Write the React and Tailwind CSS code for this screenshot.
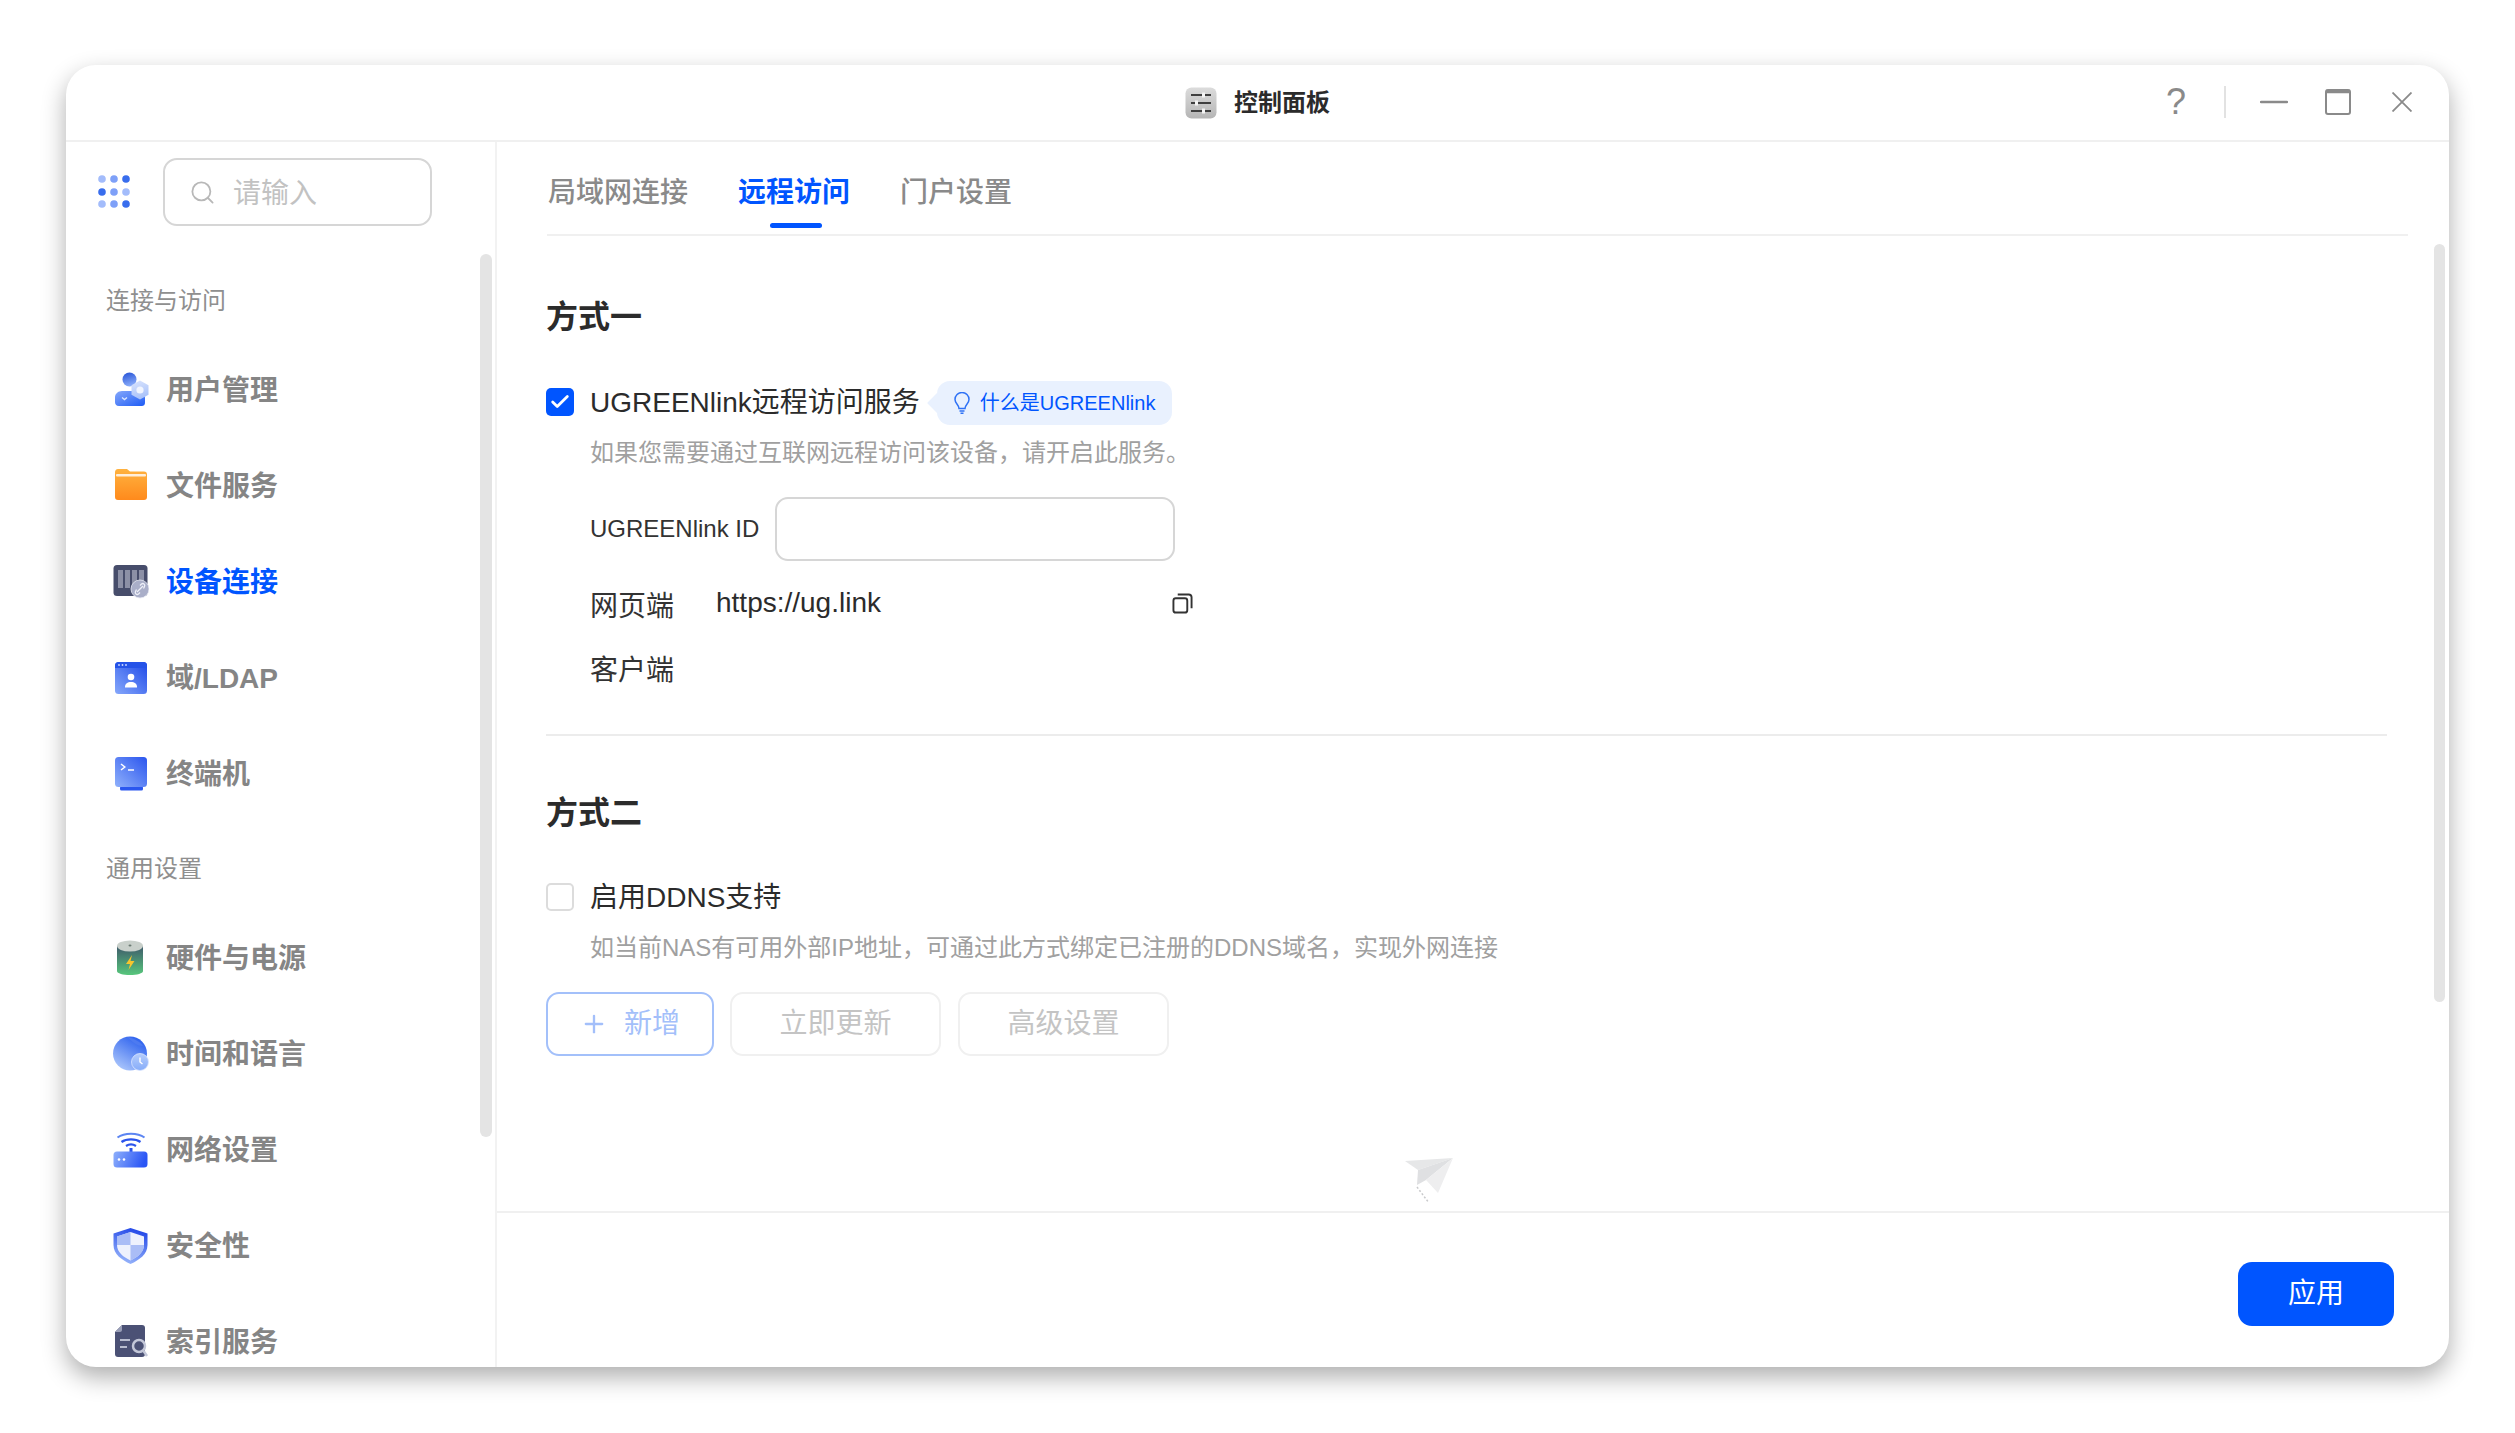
import React from 'react';
import { Search, Plus, Check } from 'lucide-react';

const Grad = ({ id, from, to, x1 = 0, y1 = 0, x2 = 1, y2 = 1 }) => (
  <linearGradient id={id} x1={x1} y1={y1} x2={x2} y2={y2}>
    <stop offset="0" stopColor={from} />
    <stop offset="1" stopColor={to} />
  </linearGradient>
);

function UserIcon() {
  return (
    <svg viewBox="0 0 36 36" className="w-[36px] h-[36px] shrink-0">
      <defs>
        <Grad id="u1" from="#2350d6" to="#86a9f8" x2={0.300} />
        <Grad id="u2" from="#86a8fb" to="#1d5bf5" />
        <Grad id="u3" from="#dbe5fd" to="#a9c2fa" x2={0.300} />
      </defs>
      <circle cx="16.500" cy="7.500" r="7" fill="url(#u1)" />
      <path d="M2 25c0-3 3-6 7-6h12c6 0 11 3 11 7v4c0 3-1 4-4 4H6c-3 0-4-2-4-4z" fill="url(#u2)" />
      <path d="M9 25.500l2.500 2 2.500-2" stroke="#dbe6ff" strokeWidth="1.400" fill="none" />
      <path d="M27 8.500l8.500 4.800v9.400L27 27.500l-8.500-4.800v-9.400z" fill="url(#u3)" />
      <circle cx="27" cy="18" r="3.600" fill="#f1f5ff" />
    </svg>
  );
}

function FolderIcon() {
  return (
    <svg viewBox="0 0 36 36" className="w-[36px] h-[36px] shrink-0">
      <defs>
        <Grad id="f1" from="#ffb23f" to="#ff8a1c" x2={0} />
      </defs>
      <path d="M2 4c0-1.500 1-3 3-3h9l3 2.500h14c2 0 3 1 3 3V29c0 2-1 3-3 3H5c-2 0-3-1-3-3z" fill="url(#f1)" />
      <rect x="3" y="6" width="30" height="2.500" rx="1" fill="#ffeeda" />
    </svg>
  );
}

function DeviceIcon() {
  return (
    <svg viewBox="0 0 36 36" className="w-[36px] h-[36px] shrink-0">
      <rect x="0.500" y="1" width="34" height="31" rx="3.500" fill="#474d6b" />
      <rect x="5" y="6" width="5" height="18" fill="#8c90a6" />
      <rect x="12" y="6" width="5" height="18" fill="#8c90a6" />
      <rect x="19" y="6" width="5" height="18" fill="#8c90a6" />
      <rect x="26" y="6" width="5" height="14" fill="#8c90a6" />
      <circle cx="27" cy="25" r="9" fill="#a9aec8" stroke="#e6e8f2" strokeWidth="0.800" />
      <path d="M24 28l6-6M23.500 25.500l-1 2a2 2 0 0 0 3 2.500l1.500-1.500M30.500 24.500l1-2a2 2 0 0 0-3-2.500L27 21.500" stroke="#eef0f8" strokeWidth="1.300" fill="none" />
    </svg>
  );
}

function LdapIcon() {
  return (
    <svg viewBox="0 0 36 36" className="w-[36px] h-[36px] shrink-0">
      <defs>
        <Grad id="l1" from="#1e49e8" to="#86a8fb" x1={1} y1={0} x2={0} y2={1} />
      </defs>
      <rect x="2" y="2" width="32" height="32" rx="3.500" fill="url(#l1)" />
      <path d="M2 8V5.500C2 3.500 3.500 2 5.500 2h25C32.500 2 34 3.500 34 5.500V8z" fill="#2553e8" />
      <circle cx="6" cy="5" r="0.900" fill="#cfdbff" />
      <circle cx="9.500" cy="5" r="0.900" fill="#cfdbff" />
      <circle cx="13" cy="5" r="0.900" fill="#cfdbff" />
      <circle cx="18" cy="17" r="3.300" fill="#fff" />
      <path d="M12 27c0-3.500 2.500-5 6-5s6 1.500 6 5v0.500H12z" fill="#fff" />
    </svg>
  );
}

function TerminalIcon() {
  return (
    <svg viewBox="0 0 36 36" className="w-[36px] h-[36px] shrink-0">
      <defs>
        <Grad id="t1" from="#2a55ee" to="#8fb0fb" x1={1} y1={0} x2={0} y2={1} />
      </defs>
      <rect x="7" y="30" width="23" height="4.500" rx="1.500" fill="#2a57ef" />
      <rect x="2" y="1" width="32" height="30" rx="3.500" fill="url(#t1)" />
      <path d="M8 8l3.800 3L8 14" stroke="#fff" strokeWidth="1.500" fill="none" />
      <path d="M15 14h6" stroke="#fff" strokeWidth="1.500" />
    </svg>
  );
}

function BatteryIcon() {
  return (
    <svg viewBox="0 0 36 36" className="w-[36px] h-[36px] shrink-0">
      <defs>
        <Grad id="b1" from="#3f5a6b" to="#57c77c" x2={0} />
      </defs>
      <path d="M4 6v25c0 2.500 6 4 13 4s13-1.500 13-4V6z" fill="url(#b1)" />
      <ellipse cx="17" cy="6" rx="13" ry="5.500" fill="#c9d0cb" />
      <ellipse cx="17" cy="5.500" rx="1.500" ry="1" fill="#6b7a74" />
      <path d="M19 15l-6 9h4l-1.500 6 6-9h-4z" fill="#f7c52d" />
    </svg>
  );
}

function GlobeIcon() {
  return (
    <svg viewBox="0 0 36 36" className="w-[36px] h-[36px] shrink-0">
      <defs>
        <Grad id="g1" from="#2b60ee" to="#b5cefc" x1={0.700} y1={0} x2={0.100} y2={1} />
        <Grad id="g2" from="#b5cdfc" to="#86acf9" x2={0} />
      </defs>
      <circle cx="17" cy="17.500" r="17" fill="url(#g1)" />
      <path d="M14 1c6 1 14 5 16 9-6 0-9-3-16-9z" fill="#4d7af0" />
      <circle cx="27" cy="26" r="8.500" fill="url(#g2)" stroke="#d9e5fe" strokeWidth="0.800" />
      <path d="M27 21.500V26l2.500 2" stroke="#fff" strokeWidth="1.400" fill="none" />
    </svg>
  );
}

function RouterIcon() {
  return (
    <svg viewBox="0 0 36 36" className="w-[36px] h-[36px] shrink-0">
      <defs>
        <Grad id="r1" from="#8fb0fb" to="#2a55f5" y2={0.200} />
      </defs>
      <path d="M4.500 5.500c7-5 20-5 27 0" stroke="#5c85f2" strokeWidth="2" fill="none" />
      <path d="M8.500 10c5-3.500 14-3.500 19 0" stroke="#2b54ec" strokeWidth="2.200" fill="none" />
      <path d="M13 14c3-2 7-2 10 0" stroke="#2b54ec" strokeWidth="2.200" fill="none" />
      <rect x="16.500" y="16" width="3" height="6" fill="#2b54ec" />
      <rect x="0.500" y="19.500" width="34" height="16" rx="3.500" fill="url(#r1)" />
      <circle cx="6" cy="27.500" r="1.300" fill="#fff" />
      <circle cx="11" cy="27.500" r="1.300" fill="#fff" />
    </svg>
  );
}

function ShieldIcon() {
  return (
    <svg viewBox="0 0 36 36" className="w-[36px] h-[36px] shrink-0">
      <defs>
        <Grad id="s1" from="#2348e8" to="#9ab7fb" x1={0.600} y1={0} x2={0.300} y2={1} />
      </defs>
      <path d="M17.500 0L34.500 5.500V17c0 9-8 15-17 19C8.500 32 0.500 26 0.500 17V5.500z" fill="url(#s1)" />
      <path d="M17.500 4L31 8.500V17c0 7-6 12-13.500 15.500C10 29 4 24 4 17V8.500z" fill="#eef1fd" />
      <path d="M17.500 4L4 8.500V17h13.500zM17.500 17V32.500C25 29 31 24 31 17z" fill="#9db4f5" opacity="0.850" />
    </svg>
  );
}

function IndexIcon() {
  return (
    <svg viewBox="0 0 36 36" className="w-[36px] h-[36px] shrink-0">
      <path d="M9 1h20c2 0 3 1 3 3v26c0 2-1 3-3 3H5c-2 0-3-1-3-3V8z" fill="#4b5175" />
      <path d="M9 1L2 8h5c1 0 2-1 2-2z" fill="#9a9fb8" />
      <path d="M7 16h10M7 23h7" stroke="#b9bdd0" strokeWidth="1.800" />
      <circle cx="26" cy="22" r="6" fill="#4b5175" stroke="#c3c7d8" strokeWidth="2.500" />
      <path d="M30.500 27l3.500 5" stroke="#c3c7d8" strokeWidth="2.500" />
    </svg>
  );
}

function AppGrid() {
  const dots = ['#a3bcfb', '#7ea0f8', '#386ded', '#386ded', '#7ea0f8', '#a3bcfb', '#a3bcfb', '#7ea0f8', '#386ded'];
  return (
    <div className="grid grid-cols-3 gap-[4.500px] w-[32px] shrink-0">
      {dots.map((c, i) => (
        <svg key={i} viewBox="0 0 8 8" className="w-[8px] h-[8px]"><circle cx="4" cy="4" r="3.800" fill={c} /></svg>
      ))}
    </div>
  );
}

function TitleIcon() {
  return (
    <svg viewBox="0 0 32 32" className="w-[32px] h-[32px]">
      <defs>
        <Grad id="ti" from="#dcdcdc" to="#b5b5b5" x2={0} />
      </defs>
      <rect x="0.500" y="0.500" width="31" height="31" rx="6" fill="url(#ti)" />
      <path d="M6 8h20M6 16h20M6 24h20" stroke="#3f3f3f" strokeWidth="1.800" />
      <rect x="17" y="5.500" width="3" height="5" fill="#f4f4f4" />
      <rect x="10" y="13.500" width="3" height="5" fill="#f4f4f4" />
      <rect x="17" y="21.500" width="3" height="5" fill="#f4f4f4" />
    </svg>
  );
}

function NavItem({ icon, label, active }) {
  return (
    <div className="h-[96px] flex items-center pl-[47px] gap-[17px]">
      {icon}
      <span className={`pt-[1px] text-[28px] font-bold leading-[40px] ${active ? 'text-[#0055ff]' : 'text-[#858585]'}`}>{label}</span>
    </div>
  );
}

function SectionLabel({ children }) {
  return <div className="h-[88px] pt-[31px] pl-[40px] text-[24px] leading-[32px] text-[#8f8f8f]">{children}</div>;
}

function Sidebar() {
  return (
    <aside className="relative w-[431px] shrink-0 border-r-2 border-[#f2f2f2] overflow-hidden">
      <div className="h-[112px] pt-[16px] pl-[32px] flex items-start gap-[33px]">
        <div className="h-[67px] flex items-center"><AppGrid /></div>
        <div className="w-[269px] h-[68px] rounded-[14px] border-2 border-[#d6d6d6] flex items-center pl-[24px] gap-[17px]">
          <Search size={27} strokeWidth={1.600} className="text-[#b8b8b8]" />
          <span className="pt-[4px] text-[28px] text-[#c2c2c2]">请输入</span>
        </div>
      </div>
      <SectionLabel>连接与访问</SectionLabel>
      <NavItem icon={<UserIcon />} label="用户管理" />
      <NavItem icon={<FolderIcon />} label="文件服务" />
      <NavItem icon={<DeviceIcon />} label="设备连接" active />
      <NavItem icon={<LdapIcon />} label="域/LDAP" />
      <NavItem icon={<TerminalIcon />} label="终端机" />
      <SectionLabel>通用设置</SectionLabel>
      <NavItem icon={<BatteryIcon />} label="硬件与电源" />
      <NavItem icon={<GlobeIcon />} label="时间和语言" />
      <NavItem icon={<RouterIcon />} label="网络设置" />
      <NavItem icon={<ShieldIcon />} label="安全性" />
      <NavItem icon={<IndexIcon />} label="索引服务" />
      {/* scrollbar */}
      <div className="absolute left-[414px] top-[112px] w-[12px] h-[883px] rounded-full bg-[#e4e4e4]" />
    </aside>
  );
}

function Tabs() {
  return (
    <div className="ml-[1px] pl-[1px] h-[94px] mr-[41px] border-b-2 border-[#f0f0f0] flex items-center gap-[50px] pt-[9px] text-[28px] font-medium leading-[40px]">
      <span className="text-[#8a8a8a]">局域网连接</span>
      <span className="relative font-bold text-[#0055ff]">
        远程访问
        <span className="absolute left-[32px] top-[50px] w-[52px] h-[5px] rounded-full bg-[#0055ff]" />
      </span>
      <span className="text-[#8a8a8a]">门户设置</span>
    </div>
  );
}

function Bulb() {
  return (
    <svg viewBox="0 0 18 22" className="relative w-[18px] h-[22px] shrink-0" fill="none" stroke="#2f72f5" strokeWidth="1.500">
      <path d="M6 16.500C6 13 2 11.500 2 7.500a7 7 0 0 1 14 0c0 4-4 5.500-4 9z" />
      <path d="M6.500 19h5M7.500 21.200h3" />
    </svg>
  );
}

function Content() {
  return (
    <div className="relative flex-1 pl-[49px]">
      <Tabs />
      <h2 className="mt-[59px] text-[32px] font-bold leading-[44px] text-[#2b2b2b]">方式一</h2>

      <div className="mt-[42px] h-[44px] flex items-center">
        <div className="-mt-[3px] w-[28px] h-[28px] rounded-[5px] bg-[#0055ff] flex items-center justify-center">
          <Check size={22} strokeWidth={3} className="text-white" />
        </div>
        <span className="ml-[16px] text-[28px] leading-[44px] text-[#2b2b2b]">UGREENlink远程访问服务</span>
        <span className="relative ml-[17px] w-[235px] h-[44px] rounded-[13px] bg-[#e9f1fe] flex items-center pl-[16px] gap-[9px] text-[20px] text-[#0055ff]">
          <span className="absolute left-[-7px] top-[15px] w-[14px] h-[14px] rotate-45 bg-[#e9f1fe]" />
          <Bulb />
          <span className="relative">什么是UGREENlink</span>
        </span>
      </div>
      <p className="mt-[11px] pl-[44px] text-[24px] leading-[34px] text-[#a0a0a0]">如果您需要通过互联网远程访问该设备，请开启此服务。</p>

      <div className="mt-[27px] pl-[44px] flex items-center">
        <span className="text-[24px] leading-[34px] text-[#333333]">UGREENlink ID</span>
        <div className="ml-[16px] w-[400px] h-[64px] rounded-[13px] border-2 border-[#d6d6d6]" />
      </div>

      <div className="mt-[26px] pl-[44px] h-[40px] flex items-center">
        <span className="w-[126px] text-[28px] leading-[40px] text-[#333333]">网页端</span>
        <span className="w-[172px] -mt-[8px] text-[28px] leading-[40px] text-[#2b2b2b] whitespace-nowrap">https://ug.link</span>
        <svg viewBox="0 0 22 22" className="ml-[284px] -mt-[7px] w-[21px] h-[21px]" fill="none" stroke="#333333" strokeWidth="2">
          <rect x="1.500" y="5.500" width="14.500" height="15" rx="2.500" />
          <path d="M6 1.500h11.500c2 0 3 1 3 3V16" />
        </svg>
      </div>
      <div className="mt-[24px] pl-[44px] h-[40px] flex items-center text-[28px] leading-[40px] text-[#333333]">客户端</div>

      <div className="mt-[43px] w-[1841px] h-[2px] bg-[#ececec]" />

      <h2 className="mt-[55px] text-[32px] font-bold leading-[44px] text-[#2b2b2b]">方式二</h2>
      <div className="mt-[41px] h-[44px] flex items-center">
        <div className="-mt-[3px] w-[28px] h-[28px] rounded-[5px] border-2 border-[#dcdcdc]" />
        <span className="ml-[16px] text-[28px] leading-[44px] text-[#2b2b2b]">启用DDNS支持</span>
      </div>
      <p className="mt-[11px] pl-[44px] text-[24px] leading-[34px] text-[#a0a0a0]">如当前NAS有可用外部IP地址，可通过此方式绑定已注册的DDNS域名，实现外网连接</p>

      <div className="mt-[27px] flex gap-[16px] text-[28px]">
        <div className="w-[168px] h-[64px] rounded-[13px] border-2 border-[#a3c0fa] flex items-center justify-center gap-[16px] text-[#a3bffa]">
          <Plus size={28} strokeWidth={2} />
          <span>新增</span>
        </div>
        <div className="w-[211px] h-[64px] rounded-[13px] border-2 border-[#f0f0f0] flex items-center justify-center text-[#c4c4c4]">立即更新</div>
        <div className="ml-[1px] w-[211px] h-[64px] rounded-[13px] border-2 border-[#f0f0f0] flex items-center justify-center text-[#c4c4c4]">高级设置</div>
      </div>

      {/* paper plane decoration */}
      <svg viewBox="0 0 50 46" className="absolute left-[908px] top-[1016px] w-[50px] h-[46px]">
        <path d="M0 3L48 0 13 12z" fill="#e6e7e8" />
        <path d="M13 12L48 0 21 22 12 27z" fill="#dfe0e2" />
        <path d="M48 0L33 35 21 22z" fill="#eeeeef" />
        <path d="M12 29l12 16" stroke="#c8c9cb" strokeWidth="1.500" strokeDasharray="2 2" fill="none" />
      </svg>

      {/* scrollbar */}
      <div className="absolute right-[4px] top-[102px] w-[11px] h-[758px] rounded-full bg-[#e4e4e4]" />
    </div>
  );
}

export default function App() {
  return (
    <div className="w-[2515px] h-[1433px] bg-white pt-[65px] pl-[66px] font-['Liberation_Sans','Noto_Sans_CJK_SC',sans-serif]">
      <div className="w-[2383px] h-[1302px] rounded-[30px] bg-white overflow-hidden flex flex-col shadow-[0_10px_24px_rgba(0,0,0,0.32)]">
        <header className="relative h-[77px] shrink-0 border-b-2 border-[#f0f0f0] flex items-center justify-center">
          <div className="flex items-center gap-[17px]">
            <TitleIcon />
            <span className="text-[24px] font-bold text-[#2b2b2b]">控制面板</span>
          </div>
          <div className="absolute right-[37px] top-[20px] flex items-center text-[#8a8a8a]">
            <span className="w-[24px] text-center text-[36px] leading-[34px] font-normal">?</span>
            <span className="ml-[36px] w-[2px] h-[32px] bg-[#e2e2e2]" />
            <svg viewBox="0 0 28 4" className="ml-[34px] w-[28px] h-[4px]" stroke="#8a8a8a" strokeWidth="2.500" strokeLinecap="round">
              <path d="M1 2h26" />
            </svg>
            <svg viewBox="0 0 26 26" className="ml-[37px] w-[26px] h-[26px]" fill="none" stroke="#8a8a8a" strokeWidth="2">
              <rect x="1" y="1" width="24" height="24" rx="2" />
              <path d="M1 2.500h24" strokeWidth="3.500" />
            </svg>
            <svg viewBox="0 0 20 20" className="ml-[41px] w-[20px] h-[20px]" stroke="#8a8a8a" strokeWidth="1.800">
              <path d="M0.500 0.500l19 19M19.500 0.500l-19 19" />
            </svg>
          </div>
        </header>
        <div className="flex-1 flex min-h-0">
          <Sidebar />
          <main className="flex-1 flex flex-col min-w-0">
            <Content />
            <footer className="h-[156px] shrink-0 border-t-2 border-[#f0f0f0] pt-[49px] pr-[55px] flex justify-end items-start">
              <div className="w-[156px] h-[64px] rounded-[14px] bg-[#0055ff] flex items-center justify-center text-[28px] text-white">应用</div>
            </footer>
          </main>
        </div>
      </div>
    </div>
  );
}
